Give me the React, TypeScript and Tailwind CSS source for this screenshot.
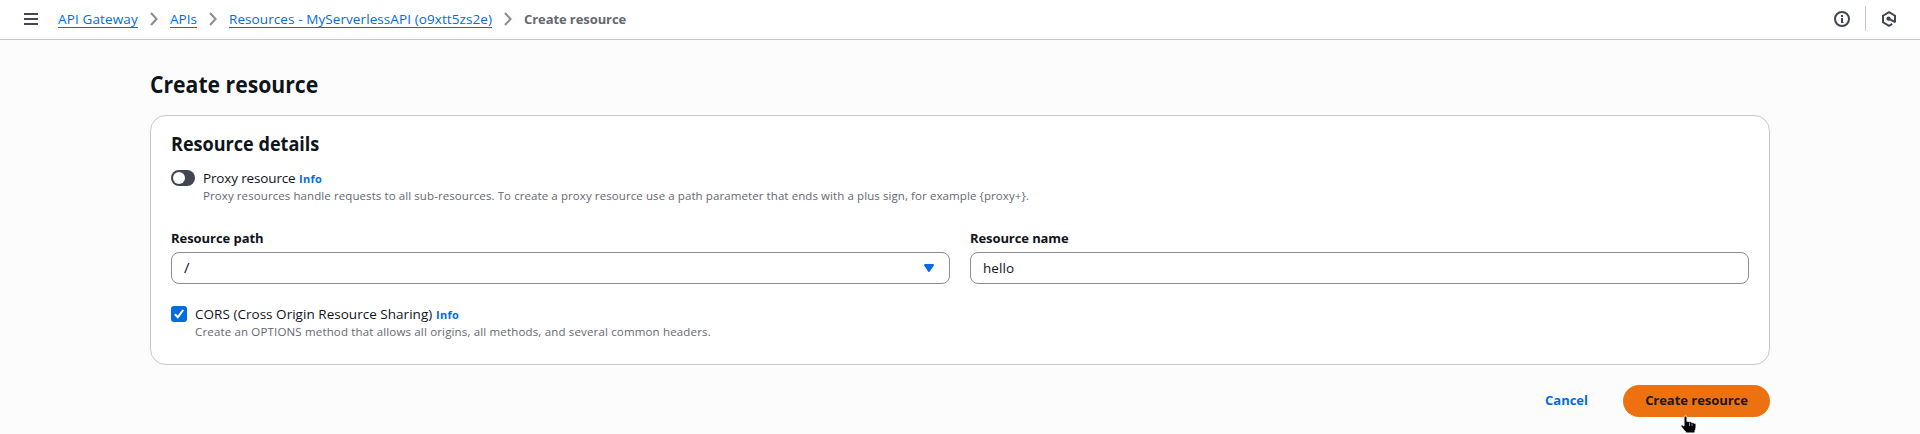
import type { ReactNode } from "react";

function Crumb({ children, spacing }: { children: ReactNode; spacing: string }) {
  return (
    <>
      <a href="#" className={"block h-[19px] border-b border-[#006ce0] text-[13.5px] leading-5 whitespace-nowrap text-[#006ce0] " + spacing}>
        {children}
      </a>
      <svg width="8" height="14" viewBox="0 0 8 14" fill="none" stroke="#8c8c94" strokeWidth="2" className="mx-3 mt-[3px] shrink-0">
        <path d="M1 1l5.6 6L1 13" />
      </svg>
    </>
  );
}

function Info() {
  return (
    <a href="#" className="ml-1 pt-px text-[11px] leading-5 font-bold tracking-[0.3px] text-[#006ce0]">
      Info
    </a>
  );
}

function TopBar() {
  return (
    <header className="flex h-10 items-start justify-between border-b border-[#c6c6cd] bg-white pr-[23px] pl-6">
      <nav className="flex items-start pt-[9px]">
        <svg width="14" height="12" viewBox="0 0 14 12" fill="#424650" className="mt-1 mr-5">
          <path d="M0 0h14v2H0zM0 5h14v2H0zM0 10h14v2H0z" />
        </svg>
        <Crumb spacing="w-20 tracking-[0.14px]">API Gateway</Crumb>
        <Crumb spacing="w-[27px]">APIs</Crumb>
        <Crumb spacing="w-[263px] tracking-[0.09px]">Resources - MyServerlessAPI (o9xtt5zs2e)</Crumb>
        <span className="h-[19px] leading-5 font-bold tracking-[-0.08px] text-[#656871]">Create resource</span>
      </nav>
      <div className="flex items-center pt-[6px]">
        <svg width="16" height="16" viewBox="0 0 16 16" fill="none" stroke="#424650" strokeWidth="2" className="mt-px">
          <circle cx="8" cy="8" r="7" />
          <path d="M8 4v2M8 7v5" />
          <path d="M7 7.5h1M7 11.5h2.5" strokeWidth="1" />
        </svg>
        <div className="mr-[15px] ml-[15px] h-[25px] w-px bg-[#c6c6cd]" />
        <svg width="16" height="16" viewBox="0 0 16 16" fill="none" stroke="#424650" strokeWidth="2" className="mt-px">
          <path d="M14 11V4.7L8 1.2 2 4.7v6.6l6 3.5 3.2-1.9" />
          <circle cx="7.5" cy="7.7" r="2.1" fill="#424650" stroke="none" />
          <path d="M7.5 7.7l7 3.7" />
        </svg>
      </div>
    </header>
  );
}

export default function App() {
  return (
    <div className="relative h-[434px] overflow-hidden bg-[#fcfcfd] font-['Open_Sans','Noto_Sans',sans-serif] text-[13px] text-[#0f141a]">
      <TopBar />
      <main className="mx-auto w-[1620px] pt-[29px]">
        <h1 className="origin-left scale-x-[0.882] text-[24px] leading-[30px] font-bold">Create resource</h1>

        <section className="mt-4 h-[250px] rounded-2xl border border-[#c6c6cd] bg-white px-5 pt-4">
          <h2 className="origin-left scale-x-[0.903] text-[20px] leading-6 font-bold">Resource details</h2>

          <div className="mt-3 flex h-9">
            <button className="mt-[2px] mr-2 flex h-4 w-6 items-center rounded-full bg-[#424650] pl-[2px]">
              <span className="h-3 w-3 rounded-full bg-white" />
            </button>
            <div>
              <div className="flex h-5 leading-5">
                <span className="w-[92px] text-[13.5px] tracking-[-0.15px] whitespace-nowrap">Proxy resource</span>
                <Info />
              </div>
              <p className="text-[11.5px] leading-4 tracking-[0.088px] text-[#656871]">
                Proxy resources handle requests to all sub-resources. To create a proxy resource use a path parameter
                that ends with a plus sign, for example {"{proxy+}"}.
              </p>
            </div>
          </div>

          <div className="mt-6 grid grid-cols-2 gap-5">
            <div>
              <div className="leading-5 font-bold tracking-[-0.05px]">Resource path</div>
              <div className="mt-1 flex h-8 items-center justify-between rounded-lg border border-[#8c8c94] px-3">
                <span className="pb-px text-[15px]">/</span>
                <svg width="16" height="16" viewBox="0 0 16 16">
                  <path d="M4 5h8l-4 6z" fill="#006ce0" stroke="#006ce0" strokeWidth="2" strokeLinejoin="round" />
                </svg>
              </div>
            </div>
            <div>
              <div className="leading-5 font-bold tracking-[-0.09px]">Resource name</div>
              <div className="mt-1 flex h-8 items-center rounded-lg border border-[#8c8c94] px-3 text-[13.5px] tracking-[0.05px]">hello</div>
            </div>
          </div>

          <div className="mt-5 flex h-9">
            <div className="mt-[2px] mr-2 flex h-4 w-4 items-center justify-center rounded-[3px] bg-[#006ce0]">
              <svg width="16" height="16" viewBox="0 0 16 16" fill="none" stroke="#fff" strokeWidth="2">
                <path d="M3.8 8.2l3 3 5.4-7.2" />
              </svg>
            </div>
            <div>
              <div className="flex h-5 leading-5">
                <span className="w-[237px] text-[13.5px] tracking-[0.03px] whitespace-nowrap">CORS (Cross Origin Resource Sharing)</span>
                <Info />
              </div>
              <p className="text-[11.5px] leading-4 tracking-[0.16px] text-[#656871]">
                Create an OPTIONS method that allows all origins, all methods, and several common headers.
              </p>
            </div>
          </div>
        </section>

        <div className="mt-5 flex items-center justify-end font-bold">
          <button className="mr-[35px] w-[43px] whitespace-nowrap text-[#006ce0]">Cancel</button>
          <button className="h-8 w-[147px] rounded-full bg-[#ec7211] tracking-[-0.04px] whitespace-nowrap text-[#16191f]">
            Create resource
          </button>
        </div>
      </main>

      <svg width="17" height="19" viewBox="0 0 17 19" className="absolute top-[415px] left-[1680px]">
        <path
          d="M5.5 1C6.500 1 7 1.600 7 2.500v4c.6-.5 2-.4 2.500.5.8-.5 2-.3 2.500.7 1-.5 1.800.1 2 .6.9-.3 2 .1 2 1.200V13c0 1-1 2-1 3v2H6c0-1-1.500-2.300-2.500-3.500l-2.400-3C.5 10.300 1.600 9.500 2.500 10.100L4 11V2.500C4 1.600 4.500 1 5.500 1z"
          fill="#000"
          stroke="#fff"
          strokeWidth="1"
        />
        <path d="M9.5 8v3M12 8.5V11" stroke="#fff" strokeWidth=".6" />
      </svg>
    </div>
  );
}
